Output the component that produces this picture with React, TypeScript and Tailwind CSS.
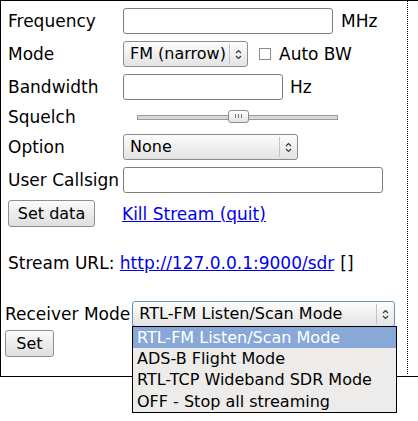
import React from 'react';

const font = "font-['DejaVu_Sans',sans-serif]";

function Arrows() {
  return (
    <svg width="7" height="11" viewBox="0 0 7 11" className="block">
      <path d="M1 4 L3.5 1.5 L6 4" fill="none" stroke="#333" strokeWidth="1.1" />
      <path d="M1 7 L3.5 9.5 L6 7" fill="none" stroke="#333" strokeWidth="1.1" />
    </svg>
  );
}

function Select({ text, className, focused }: { text: string; className: string; focused?: boolean }) {
  return (
    <div
      className={
        'h-[26px] flex items-center rounded-[3px] border bg-linear-to-b from-[#fdfdfd] to-[#e3e3e3] shrink-0 text-[16px] ' +
        (focused ? 'border-[#6d8cbd] ' : 'border-[#8c8c8c] ') +
        className
      }
    >
      <span className="flex-1 pl-[6px] whitespace-nowrap overflow-hidden">{text}</span>
      <div className="w-[18px] h-[20px] border-l border-[#c4c4c4] flex items-center justify-center">
        <Arrows />
      </div>
    </div>
  );
}

function Input({ className }: { className: string }) {
  return <div className={'h-[26px] rounded-[3px] border border-[#7d7d7d] bg-white shrink-0 ' + className} />;
}

function Button({ label, className }: { label: string; className: string }) {
  return (
    <div
      className={
        'flex items-center justify-center rounded-[3px] border border-[#8e8e8e] bg-linear-to-b from-[#fbfbfb] to-[#dedede] text-[16px] ' +
        className
      }
    >
      {label}
    </div>
  );
}

function Row({ label, children, h = 'h-[26px]' }: { label: string; children?: React.ReactNode; h?: string }) {
  return (
    <div className={'flex items-center ' + h}>
      <div className="w-[115px] shrink-0 whitespace-nowrap">{label}</div>
      {children}
    </div>
  );
}

export default function App() {
  return (
    <div className={'w-[418px] h-[421px] bg-white text-black text-[17px] leading-[20px] ' + font}>
      <div className="relative h-[377px] border-t border-l border-b border-black">
        <div className="w-[407px] h-[373px] border-r border-dotted border-black">
          {/* Tuning form */}
          <div className="pt-[7px] pl-[7px] flex flex-col gap-[7px]">
            <Row label="Frequency">
              <Input className="w-[210px]" />
              <span className="ml-[8px]">MHz</span>
            </Row>
            <Row label="Mode">
              <Select text="FM (narrow)" className="w-[125px]" />
              <div className="ml-[11px] w-[12px] h-[12px] border border-[#8a8a8a] bg-white" />
              <span className="ml-[8px]">Auto BW</span>
            </Row>
            <Row label="Bandwidth">
              <Input className="w-[160px]" />
              <span className="ml-[7px]">Hz</span>
            </Row>
            <Row label="Squelch" h="h-[20px]">
              <div className="relative ml-[14px] w-[201px] h-[5px] border border-[#9a9a9a] bg-[#d8d8d8]">
                <div className="absolute left-[90px] top-[-6px] w-[21px] h-[13px] rounded-[3px] border border-[#8c8c8c] bg-linear-to-b from-white to-[#e2e2e2] flex items-center justify-center gap-[2px]">
                  <div className="w-px h-[4px] bg-[#777]" />
                  <div className="w-px h-[4px] bg-[#777]" />
                  <div className="w-px h-[4px] bg-[#777]" />
                </div>
              </div>
            </Row>
            <Row label="Option">
              <Select text="None" className="w-[175px]" />
            </Row>
            <Row label="User Callsign">
              <Input className="w-[260px]" />
            </Row>
            <div className="flex items-center h-[27px]">
              <Button label="Set data" className="w-[87px] h-[27px] shrink-0" />
              <a href="#" className="ml-[27px] text-[#0000ee] underline">Kill Stream (quit)</a>
            </div>
          </div>

          <div className="pl-[7px] mt-[26px] flex items-center">
            <span className="whitespace-pre">Stream URL: </span>
            <a href="#" className="text-[#0000ee] underline">http://127.0.0.1:9000/sdr</a>
            <span className="ml-[6px]">[]</span>
          </div>

          {/* Receiver mode */}
          <div className="pl-[4px] mt-[28px] flex items-center">
            <span className="whitespace-nowrap">Receiver Mode</span>
            <Select text="RTL-FM Listen/Scan Mode" className="ml-[2px] w-[263px]" focused />
          </div>
          <div className="pl-[4px] mt-[3px]">
            <Button label="Set" className="w-[49px] h-[27px]" />
          </div>
        </div>

        {/* Open dropdown list */}
        <div className="absolute left-[131px] top-[325px] w-[265px] border border-black bg-[#edecea] z-10 text-[16px]">
          <div className="h-[21px] flex items-center pl-[4px] bg-[#88a8d8] text-white">RTL-FM Listen/Scan Mode</div>
          <div className="h-[21px] flex items-center pl-[4px]">ADS-B Flight Mode</div>
          <div className="h-[22px] flex items-center pl-[4px]">RTL-TCP Wideband SDR Mode</div>
          <div className="h-[21px] flex items-center pl-[4px]">OFF - Stop all streaming</div>
        </div>
      </div>
    </div>
  );
}
